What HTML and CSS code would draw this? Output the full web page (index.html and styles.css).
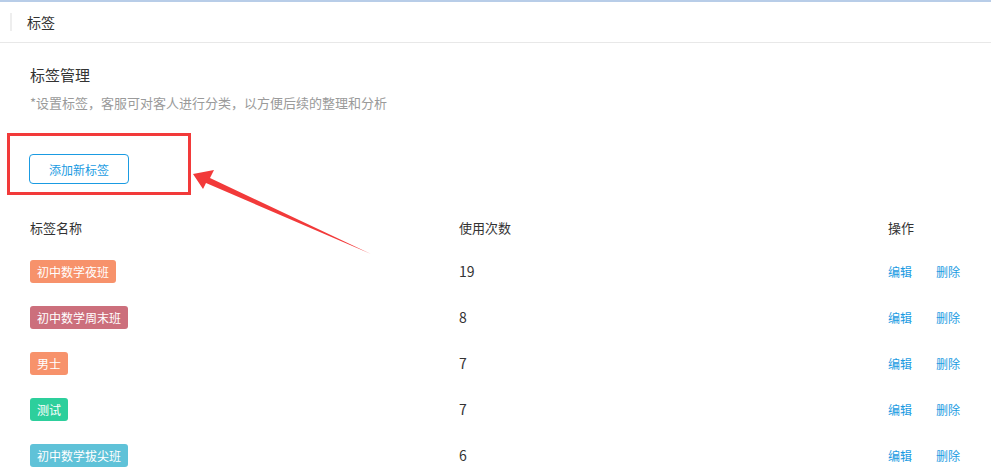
FILE: index.html
```html
<!DOCTYPE html>
<html lang="zh-CN">
<head>
    <meta charset="UTF-8">
    <meta name="viewport" content="width=device-width, initial-scale=1.0">
    <title>标签</title>
    <link rel="stylesheet" href="styles.css">
</head>
<body>
    <div class="page">
        <div class="header">
            <span class="header-bar"></span>
            <span class="header-title">标签</span>
        </div>

        <div class="content">
            <h2 class="section-title">标签管理</h2>
            <p class="section-desc">*设置标签，客服可对客人进行分类，以方便后续的整理和分析</p>

            <div class="action-area">
                <div class="highlight-box">
                    <button class="btn-add">添加新标签</button>
                </div>
            </div>

            <div class="tag-table">
                <div class="row head">
                    <div>标签名称</div>
                    <div>使用次数</div>
                    <div>操作</div>
                </div>
                <div class="row">
                    <div><span class="tag orange">初中数学夜班</span></div>
                    <div class="count">19</div>
                    <div class="ops"><a href="#">编辑</a><a href="#">删除</a></div>
                </div>
                <div class="row">
                    <div><span class="tag rose">初中数学周末班</span></div>
                    <div class="count">8</div>
                    <div class="ops"><a href="#">编辑</a><a href="#">删除</a></div>
                </div>
                <div class="row">
                    <div><span class="tag orange">男士</span></div>
                    <div class="count">7</div>
                    <div class="ops"><a href="#">编辑</a><a href="#">删除</a></div>
                </div>
                <div class="row">
                    <div><span class="tag green">测试</span></div>
                    <div class="count">7</div>
                    <div class="ops"><a href="#">编辑</a><a href="#">删除</a></div>
                </div>
                <div class="row">
                    <div><span class="tag blue">初中数学拔尖班</span></div>
                    <div class="count">6</div>
                    <div class="ops"><a href="#">编辑</a><a href="#">删除</a></div>
                </div>
            </div>
        </div>

        <!-- annotation arrow pointing at the add button -->
        <svg class="arrow" width="991" height="475" viewBox="0 0 991 475">
            <polygon points="193,174 214,170 210,178 371,254 206,183 203,189" fill="#f23a3a"/>
        </svg>
    </div>
</body>
</html>
```

FILE: styles.css
```css
body {
    margin: 0;
    font-family: "Noto Sans CJK SC", "Liberation Sans", sans-serif;
    color: #333;
    background-color: #fff;
}

.page {
    position: relative;
    border-top: 2px solid #b8cde8;
    min-height: 473px;
    overflow: hidden;
}

.header {
    display: flex;
    align-items: center;
    height: 40px;
    border-bottom: 1px solid #e8e8e8;
}

.header-bar {
    width: 2px;
    height: 18px;
    margin-left: 10px;
    background-color: #eee;
}

.header-title {
    margin-left: 15px;
    font-size: 14px;
    color: #333;
}

.content {
    padding: 0 0 0 30px;
}

.section-title {
    margin: 21px 0 0;
    font-size: 15px;
    font-weight: normal;
    line-height: 22px;
    color: #333;
}

.section-desc {
    margin: 7px 0 0;
    font-size: 13px;
    line-height: 20px;
    color: #9a9a9a;
}

.action-area {
    margin: 20px 0 0 -23px;
}

.highlight-box {
    width: 184px;
    height: 62px;
    border: 3px solid #f23a3a;
    padding: 18px 0 0 19px;
    box-sizing: border-box;
}

.btn-add {
    width: 100px;
    height: 30px;
    border: 1px solid #1a9be2;
    border-radius: 4px;
    background-color: #fff;
    color: #1a9be2;
    font-family: inherit;
    font-size: 12px;
    padding: 0;
}

.tag-table {
    margin-top: 23px;
}

.row {
    display: grid;
    grid-template-columns: 429px 429px 1fr;
    align-items: center;
    height: 46px;
    font-size: 13px;
}

.row.head {
    height: 30px;
    align-items: start;
}

.tag {
    display: inline-block;
    height: 23px;
    line-height: 23px;
    padding: 0 7px;
    border-radius: 3px;
    color: #fff;
    font-size: 12px;
}

.tag.orange { background-color: #f7926b; }
.tag.rose { background-color: #cc6f7c; }
.tag.green { background-color: #2dcf9c; }
.tag.blue { background-color: #5fc2d8; }

.count {
    font-size: 14px;
}

.ops a {
    color: #1a9be2;
    font-size: 12px;
    text-decoration: none;
    margin-right: 24px;
}

.arrow {
    position: absolute;
    left: 0;
    top: -2px;
    pointer-events: none;
}
```
